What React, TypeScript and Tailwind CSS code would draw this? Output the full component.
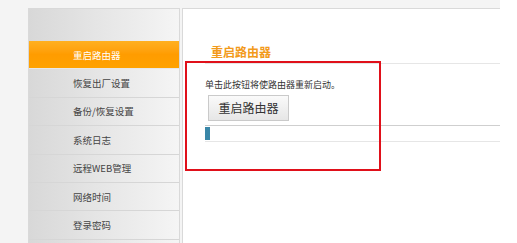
const menu = ['重启路由器', '恢复出厂设置', '备份/恢复设置', '系统日志', '远程WEB管理', '网络时间', '登录密码', ''];

export default function App() {
  return (
    <div
      className="relative w-[517px] h-[243px] overflow-hidden bg-white"
      style={{ fontFamily: '"Noto Sans CJK SC", "Liberation Sans", sans-serif' }}
    >
      <div className="w-[500px] h-full bg-[#f4f4f4] pt-[8px] pl-[28px] flex">
        {/* sidebar */}
        <div className="w-[152px] border-t border-l border-r border-[#d9d9d9] bg-gradient-to-r from-[#d8d8d8] to-[#f5f5f5]">
          <div className="h-[32px]" />
          {menu.map((item, i) => (
            <div
              key={i}
              className={
                i === 0
                  ? 'h-[28.4px] flex items-center pl-[44px] text-[9.5px] text-white bg-gradient-to-b from-[#ffb020] via-[#ff9c00] to-[#ffa200] border-b border-[#e8e8e8]'
                  : 'h-[28.4px] flex items-center pl-[44px] text-[9.5px] text-[#444] border-b border-[#d6d6d6]'
              }
            >
              {item}
            </div>
          ))}
        </div>

        {/* content */}
        <div className="ml-[2px] flex-1 bg-white border-t border-l border-[#d9d9d9] pl-[22px] pt-[37px]">
          <div className="border-b border-[#e6e6e6] pb-[5px]">
            <div className="ml-[6px] text-[12px] leading-none font-bold text-[#f29a1b]">重启路由器</div>
          </div>
          <div className="mt-[16px] text-[9px] leading-none text-[#333]">单击此按钮将使路由器重新启动。</div>
          <button className="mt-[6px] ml-[3px] w-[81px] h-[26px] border border-[#cacaca] bg-gradient-to-b from-[#fafafa] to-[#e6e6e6] text-[12px] text-[#333]">
            重启路由器
          </button>
          <div className="mt-[4px] h-[17px] border-t border-b border-t-[#cfcfcf] border-b-[#e6e6e6] py-[1px]">
            <div className="w-[5px] h-full bg-[#3a87a8]" />
          </div>
        </div>
      </div>

      {/* annotation box */}
      <div className="absolute left-[185px] top-[61px] w-[196px] h-[110px] border-2 border-[#e0101a]" />
    </div>
  );
}
